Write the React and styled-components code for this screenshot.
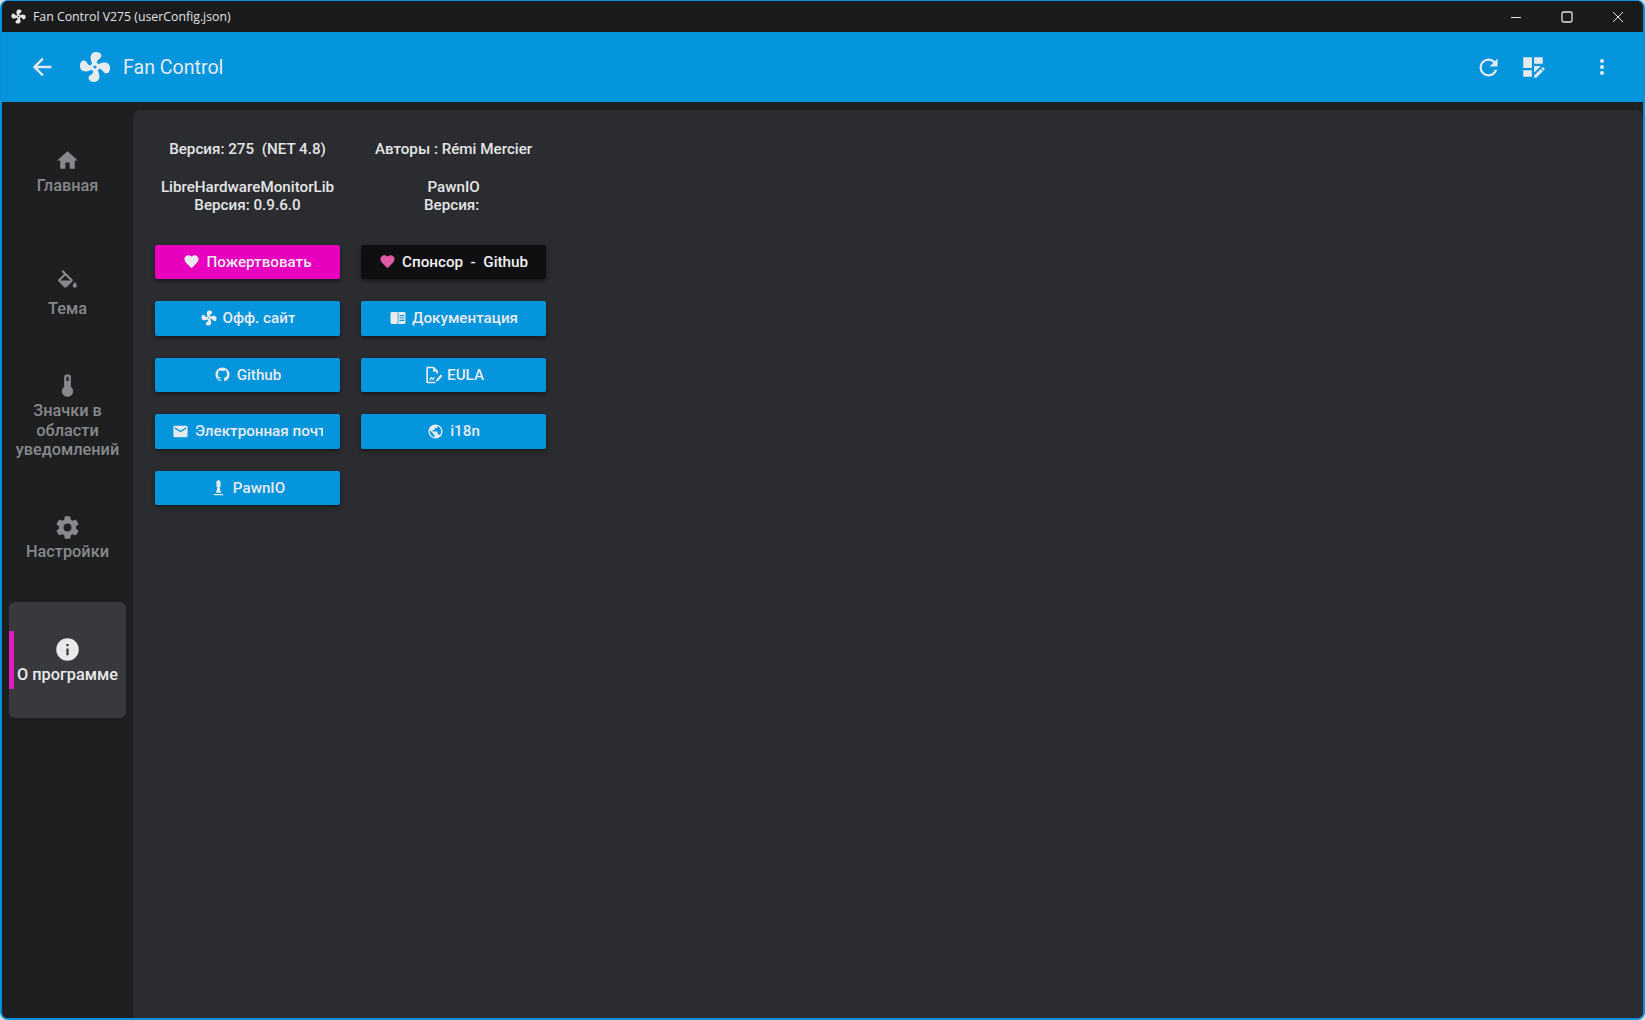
import React from "react";
import styled, { createGlobalStyle } from "styled-components";

const P = {
  fan: "M12,11A1,1 0 0,0 11,12A1,1 0 0,0 12,13A1,1 0 0,0 13,12A1,1 0 0,0 12,11M12.5,2C17,2 17.11,5.57 14.75,6.75C13.76,7.24 13.32,8.29 13.13,9.22C13.61,9.42 14.03,9.73 14.35,10.13C18.05,8.13 22.03,8.92 22.03,12.5C22.03,17 18.46,17.1 17.28,14.73C16.78,13.74 15.72,13.3 14.79,13.11C14.59,13.59 14.28,14 13.88,14.34C15.87,18.03 15.08,22 11.5,22C7,22 6.91,18.42 9.27,17.24C10.25,16.75 10.69,15.71 10.89,14.79C10.4,14.59 9.97,14.27 9.65,13.87C5.96,15.85 2,15.07 2,11.5C2,7 5.56,6.89 6.74,9.26C7.24,10.25 8.29,10.68 9.22,10.87C9.41,10.39 9.73,9.97 10.14,9.65C8.15,5.96 8.94,2 12.5,2Z",
  home: "M10,20V14H14V20H19V12H22L12,3L2,12H5V20H10Z",
  paint: "M19,11.5C19,11.5 17,13.67 17,15A2,2 0 0,0 19,17A2,2 0 0,0 21,15C21,13.67 19,11.5 19,11.5M5.21,10L10,5.21L14.79,10M16.56,8.94L7.62,0L6.21,1.41L8.59,3.79L3.44,8.94C2.85,9.5 2.85,10.47 3.44,11.06L8.94,16.56C9.23,16.85 9.62,17 10,17C10.38,17 10.77,16.85 11.06,16.56L16.56,11.06C17.15,10.47 17.15,9.5 16.56,8.94Z",
  thermo: "M15 13V5A3 3 0 0 0 9 5V13A5 5 0 1 0 15 13M12 4A1 1 0 0 1 13 5V8H11V5A1 1 0 0 1 12 4Z",
  cog: "M12,15.5A3.5,3.5 0 0,1 8.5,12A3.5,3.5 0 0,1 12,8.5A3.5,3.5 0 0,1 15.5,12A3.5,3.5 0 0,1 12,15.5M19.43,12.97C19.47,12.65 19.5,12.33 19.5,12C19.5,11.67 19.47,11.34 19.43,11L21.54,9.37C21.73,9.22 21.78,8.95 21.66,8.73L19.66,5.27C19.54,5.05 19.27,4.96 19.05,5.05L16.56,6.05C16.04,5.66 15.5,5.32 14.87,5.07L14.5,2.42C14.46,2.18 14.25,2 14,2H10C9.75,2 9.54,2.18 9.5,2.42L9.13,5.07C8.5,5.32 7.96,5.66 7.44,6.05L4.95,5.05C4.73,4.96 4.46,5.05 4.34,5.27L2.34,8.73C2.21,8.95 2.27,9.22 2.46,9.37L4.57,11C4.53,11.34 4.5,11.67 4.5,12C4.5,12.33 4.53,12.65 4.57,12.97L2.46,14.63C2.27,14.78 2.21,15.05 2.34,15.27L4.34,18.73C4.46,18.95 4.73,19.03 4.95,18.95L7.44,17.94C7.96,18.34 8.5,18.68 9.13,18.93L9.5,21.58C9.54,21.82 9.75,22 10,22H14C14.25,22 14.46,21.82 14.5,21.58L14.87,18.93C15.5,18.67 16.04,18.34 16.56,17.94L19.05,18.95C19.27,19.03 19.54,18.95 19.66,18.73L21.66,15.27C21.78,15.05 21.73,14.78 21.54,14.63L19.43,12.97Z",
  info: "M13,9H11V7H13M13,17H11V11H13M12,2A10,10 0 0,0 2,12A10,10 0 0,0 12,22A10,10 0 0,0 22,12A10,10 0 0,0 12,2Z",
  heart: "M12,21.35L10.55,20.03C5.4,15.36 2,12.27 2,8.5C2,5.41 4.42,3 7.5,3C9.24,3 10.91,3.81 12,5.08C13.09,3.81 14.76,3 16.5,3C19.58,3 22,5.41 22,8.5C22,12.27 18.6,15.36 13.45,20.03L12,21.35Z",
  refresh: "M17.65,6.35C16.2,4.9 14.21,4 12,4A8,8 0 0,0 4,12A8,8 0 0,0 12,20C15.73,20 18.84,17.45 19.73,14H17.65C16.83,16.33 14.61,18 12,18A6,6 0 0,1 6,12A6,6 0 0,1 12,6C13.66,6 15.14,6.69 16.22,7.78L13,11H20V4L17.65,6.35Z",
  dots: "M12,16A2,2 0 0,1 14,18A2,2 0 0,1 12,20A2,2 0 0,1 10,18A2,2 0 0,1 12,16M12,10A2,2 0 0,1 14,12A2,2 0 0,1 12,14A2,2 0 0,1 10,12A2,2 0 0,1 12,10M12,4A2,2 0 0,1 14,6A2,2 0 0,1 12,8A2,2 0 0,1 10,6A2,2 0 0,1 12,4Z",
  back: "M20,11V13H8L13.5,18.5L12.08,19.92L4.16,12L12.08,4.08L13.5,5.5L8,11H20Z",
  mail: "M20,8L12,13L4,8V6L12,11L20,6M20,4H4C2.89,4 2,4.89 2,6V18A2,2 0 0,0 4,20H20A2,2 0 0,0 22,18V6C22,4.89 21.1,4 20,4Z",
  earth: "M17.9,17.39C17.64,16.59 16.89,16 16,16H15V13A1,1 0 0,0 14,12H8V10H10A1,1 0 0,0 11,9V7H13A2,2 0 0,0 15,5V4.59C17.93,5.77 20,8.64 20,12C20,14.08 19.2,15.97 17.9,17.39M11,19.93C7.05,19.44 4,16.08 4,12C4,11.38 4.08,10.78 4.21,10.21L9,15V16A2,2 0 0,0 11,18M12,2A10,10 0 0,0 2,12A10,10 0 0,0 12,22A10,10 0 0,0 22,12A10,10 0 0,0 12,2Z",
  github: "M12,2A10,10 0 0,0 2,12C2,16.42 4.87,20.17 8.84,21.5C9.34,21.58 9.5,21.27 9.5,21C9.5,20.77 9.5,20.14 9.5,19.31C6.73,19.91 6.14,17.97 6.14,17.97C5.68,16.81 5.03,16.5 5.03,16.5C4.12,15.88 5.1,15.9 5.1,15.9C6.1,15.97 6.63,16.93 6.63,16.93C7.5,18.45 8.97,18 9.54,17.76C9.63,17.11 9.89,16.67 10.17,16.42C7.95,16.17 5.62,15.31 5.62,11.5C5.62,10.39 6,9.5 6.65,8.79C6.55,8.54 6.2,7.5 6.75,6.15C6.75,6.15 7.59,5.88 9.5,7.17C10.29,6.95 11.15,6.84 12,6.84C12.85,6.84 13.71,6.95 14.5,7.17C16.41,5.88 17.25,6.15 17.25,6.15C17.8,7.5 17.45,8.54 17.35,8.79C18,9.5 18.38,10.39 18.38,11.5C18.38,15.32 16.04,16.16 13.81,16.41C14.17,16.72 14.5,17.33 14.5,18.26C14.5,19.6 14.5,20.68 14.5,21C14.5,21.27 14.66,21.59 15.17,21.5C19.14,20.16 22,16.42 22,12A10,10 0 0,0 12,2Z",
  book: "M2 6C2 4.9 2.9 4 4 4H11.5V20H4C2.9 20 2 19.1 2 18ZM12.5 4H20C21.1 4 22 4.9 22 6V18C22 19.1 21.1 20 20 20H12.5ZM14 8V9.5H20.5V8ZM14 11.2V12.7H20.5V11.2ZM14 14.4V15.9H20.5V14.4Z",
  eula: "M5 2H13L18 7V10.5H16.2V8H12V3.8H6V20.2H15V22H5C4.4 22 4 21.6 4 21V3C4 2.4 4.4 2 5 2ZM7.5 17.5L10 14L12 16L14 13.5V15.6L12.1 18.3L10.1 16.4L8.7 18.4H7.5ZM16 17.5L21.5 11.5L23.4 13.3L17.8 19.3L15.6 19.9Z",
  pawn: "M5.5 23V21H18.5V23ZM8 19.5C9.4 17 10.2 13.6 10.4 10.5H8.6V8.9H10C9.3 8.2 8.8 7.2 8.8 5.8C8.8 3.8 10.2 2 12 1C13.8 2 15.2 3.8 15.2 5.8C15.2 7.2 14.7 8.2 14 8.9H15.4V10.5H13.6C13.8 13.6 14.6 17 16 19.5Z",
  dash: "M3 3H11V13H3ZM13 3H21V9H13ZM3 15H11V21H3ZM13 11H19.2L13 17.2ZM21.04 12.13C21.18 12.13 21.31 12.19 21.42 12.3L22.7 13.58C22.92 13.79 22.92 14.14 22.7 14.35L21.7 15.35L19.65 13.3L20.65 12.3C20.76 12.19 20.9 12.13 21.04 12.13M19.07 13.88L21.12 15.93L15.06 22H13V19.94L19.07 13.88Z",
};

const Global = createGlobalStyle`
  html, body, #root { margin: 0; padding: 0; height: 100%; background: #d9dde0; }
  body { font-family: Roboto, "Liberation Sans", sans-serif; overflow: hidden; }
`;

const Win = styled.div`
  width: 1645px;
  height: 1020px;
  box-sizing: border-box;
  border: 2px solid #0a8fd8;
  border-top-width: 1px;
  border-radius: 8px;
  overflow: hidden;
  display: flex;
  flex-direction: column;
  background: #1e1f21;
`;

const TitleBar = styled.div`
  height: 31px;
  flex: none;
  background: #1a1b1d;
  display: flex;
  align-items: center;
  padding-left: 8px;
  color: #e2e3e5;
`;

const TitleText = styled.span`
  font-family: "Open Sans", sans-serif;
  font-size: 12.3px;
  margin-left: 6px;
  flex: 1;
`;

const WinCtl = styled.button`
  width: 51px;
  height: 31px;
  border: 0;
  padding: 0;
  background: none;
  display: flex;
  align-items: center;
  justify-content: center;
  color: #e6e6e6;
`;

const AppBar = styled.div`
  height: 70px;
  flex: none;
  background: #0495dd;
  display: flex;
  align-items: center;
  color: #e6eaee;
  padding-left: 26px;
  padding-right: 29px;
`;

const AppTitle = styled.span`
  font-size: 19.6px;
  font-weight: 400;
  margin-left: 10px;
  flex: 1;
`;

const Ico = styled.svg`
  display: block;
  flex: none;
  fill: ${(p) => p.$color || "currentColor"};
  margin-right: ${(p) => p.$mr || 0}px;
  margin-left: ${(p) => p.$ml || 0}px;
`;

const Body = styled.div`
  flex: 1;
  min-height: 0;
  display: flex;
  background: #1e1f21;
`;

const Rail = styled.nav`
  width: 131px;
  flex: none;
  box-sizing: border-box;
  padding: 11px 7px 0;
  display: flex;
  flex-direction: column;
`;

const NavItem = styled.div`
  height: ${(p) => p.$h}px;
  flex: none;
  box-sizing: border-box;
  padding-top: ${(p) => p.$pt}px;
  position: relative;
  display: flex;
  flex-direction: column;
  align-items: center;
  color: ${(p) => (p.$active ? "#e8eaec" : "#88898c")};
  background: ${(p) => (p.$active ? "#38393c" : "transparent")};
  border-radius: 6px;
  text-align: center;
  font-size: 16.3px;
  font-weight: 500;
  line-height: 19.5px;
`;

const NavLabel = styled.div`
  margin-top: ${(p) => p.$mt ?? 3}px;
`;

const Accent = styled.span`
  position: absolute;
  left: 0;
  top: 29px;
  width: 5px;
  height: 58px;
  background: #e21cc0;
`;

const Panel = styled.main`
  flex: 1;
  margin-top: 8px;
  background: #2b2c2f;
  border-radius: 8px 8px 0 0;
  padding: 30px 0 0 22px;
  color: #e4e5e7;
`;

const Grid = styled.div`
  display: grid;
  grid-template-columns: 185px 184.5px;
  column-gap: 21.3px;
  width: max-content;
`;

const InfoCell = styled.div`
  font-size: 15.2px;
  font-weight: 500;
  line-height: 18px;
  text-align: center;
  white-space: pre;
  margin-bottom: ${(p) => p.$mb}px;
`;

const Buttons = styled(Grid)`
  row-gap: 22px;
`;

const Btn = styled.button`
  height: 34.5px;
  box-sizing: border-box;
  border: 0;
  border-radius: 2px;
  padding: 0 17px;
  display: flex;
  align-items: center;
  justify-content: safe center;
  gap: ${(p) => p.$gap}px;
  overflow: hidden;
  font-family: inherit;
  font-size: 15.2px;
  font-weight: 500;
  color: ${(p) => p.$fg || "#e9eaec"};
  background: ${(p) => p.$bg || "#0495dd"};
  box-shadow: 0 2px 4px rgba(0, 0, 0, 0.45);
`;

const BtnText = styled.span`
  white-space: nowrap;
  overflow: hidden;
  min-width: 0;
`;

const I = ({ d, s = 24, ...r }) => (
  <Ico viewBox="0 0 24 24" width={s} height={s} {...r}>
    <path d={d} />
  </Ico>
);

const nav = [
  { d: P.home, t: "Главная", h: 119, pt: 35, s: 25 },
  { d: P.paint, t: "Тема", h: 119, pt: 38, s: 25, mt: 4 },
  { d: P.thermo, t: "Значки в области уведомлений", h: 129, pt: 21, s: 27, mt: 2 },
  { d: P.cog, t: "Настройки", h: 122, pt: 34, s: 27, mt: 1 },
  { d: P.info, t: "О программе", h: 116, pt: 34, s: 27, mt: 2, active: true },
];

const btns = [
  { d: P.heart, t: "Пожертвовать", bg: "#e800bf", s: 17, gap: 6 },
  { d: P.heart, t: "Спонсор\u00a0 -\u00a0 Github", bg: "#0f0f11", ic: "#e05aa6", fg: "#f2f2f2", s: 17, gap: 6 },
  { d: P.fan, t: "Офф. сайт", s: 18, gap: 5 },
  { d: P.book, t: "Документация", s: 18, gap: 5 },
  { d: P.github, t: "Github", s: 17, gap: 6 },
  { d: P.eula, t: "EULA", s: 20, gap: 4 },
  { d: P.mail, t: "Электронная почта", s: 17, gap: 6 },
  { d: P.earth, t: "i18n", s: 17, gap: 6 },
  { d: P.pawn, t: "PawnIO", s: 17, gap: 6 },
];

export default function App() {
  return (
    <>
      <Global />
      <Win>
        <TitleBar>
          <I d={P.fan} s={17} />
          <TitleText>Fan Control V275 (userConfig.json)</TitleText>
          <WinCtl>
            <svg width="12" height="12" viewBox="0 0 12 12"><path d="M1 6.5H11" stroke="currentColor" strokeWidth="1" /></svg>
          </WinCtl>
          <WinCtl>
            <svg width="12" height="12" viewBox="0 0 12 12"><rect x="1" y="1" width="10" height="10" rx="1.5" fill="none" stroke="currentColor" strokeWidth="1.3" /></svg>
          </WinCtl>
          <WinCtl>
            <svg width="12" height="12" viewBox="0 0 12 12"><path d="M1 1L11 11M11 1L1 11" stroke="currentColor" strokeWidth="1" /></svg>
          </WinCtl>
        </TitleBar>
        <AppBar>
          <I d={P.back} s={28} />
          <I d={P.fan} s={36} $ml={21} />
          <AppTitle>Fan Control</AppTitle>
          <I d={P.refresh} s={27} />
          <I d={P.dash} s={26} $ml={18} />
          <I d={P.dots} s={24} $ml={44} />
        </AppBar>
        <Body>
          <Rail>
            {nav.map((n) => (
              <NavItem key={n.t} $h={n.h} $pt={n.pt} $active={n.active}>
                {n.active && <Accent />}
                <I d={n.d} s={n.s} />
                <NavLabel $mt={n.mt}>{n.t}</NavLabel>
              </NavItem>
            ))}
          </Rail>
          <Panel>
            <Grid>
              <InfoCell $mb={20}>{"Версия: 275\u00a0 (NET 4.8)"}</InfoCell>
              <InfoCell $mb={20}>Авторы : Rémi Mercier</InfoCell>
              <InfoCell $mb={30.7}>LibreHardwareMonitorLib<br />Версия: 0.9.6.0</InfoCell>
              <InfoCell $mb={30.7}>PawnIO<br />{"Версия:\u00a0"}</InfoCell>
            </Grid>
            <Buttons>
              {btns.map((b) => (
                <Btn key={b.t} $bg={b.bg} $fg={b.fg} $gap={b.gap}>
                  <I d={b.d} s={b.s} $color={b.ic} />
                  <BtnText>{b.t}</BtnText>
                </Btn>
              ))}
            </Buttons>
          </Panel>
        </Body>
      </Win>
    </>
  );
}
